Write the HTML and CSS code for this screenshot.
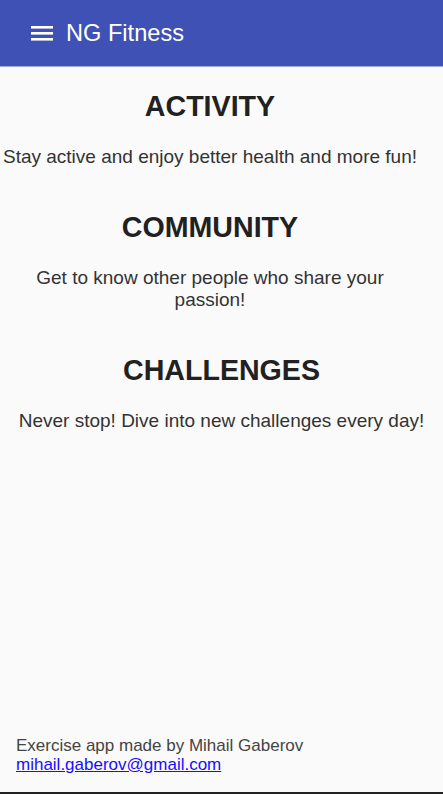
FILE: index.html
```html
<!DOCTYPE html>
<html>
<head>
<meta charset="utf-8">
<link rel="stylesheet" href="styles.css">
</head>
<body>
<div class="app">
  <header class="toolbar">
    <svg class="menu" width="22" height="16" viewBox="0 0 22 16"><rect x="0" y="1" width="22" height="2.6" fill="#fff"/><rect x="0" y="7" width="22" height="2.6" fill="#fff"/><rect x="0" y="13" width="22" height="2.6" fill="#fff"/></svg>
    <span class="title">NG Fitness</span>
  </header>
  <main class="content">
    <section class="block narrow">
      <h2>ACTIVITY</h2>
      <p>Stay active and enjoy better health and more fun!</p>
    </section>
    <section class="block narrow">
      <h2>COMMUNITY</h2>
      <p>Get to know other people who share your passion!</p>
    </section>
    <section class="block">
      <h2>CHALLENGES</h2>
      <p>Never stop! Dive into new challenges every day!</p>
    </section>
  </main>
  <footer class="footer">
    <div>Exercise app made by Mihail Gaberov</div>
    <a href="#">mihail.gaberov@gmail.com</a>
  </footer>
</div>
</body>
</html>
```
FILE: styles.css
```css
html, body {
  margin: 0;
  padding: 0;
  height: 100%;
}
body {
  background: #fafafa;
  font-family: "Liberation Sans", Arial, sans-serif;
}
.app {
  height: 792px;
  display: flex;
  flex-direction: column;
  border-bottom: 2px solid #222;
}
.toolbar {
  height: 66px;
  background: #3f51b5;
  border-bottom: 1px solid #9fa8da;
  display: flex;
  align-items: center;
  padding-left: 31px;
  box-sizing: content-box;
  flex-shrink: 0;
}
.menu {
  display: block;
  margin-right: 13px;
}
.title {
  color: #fff;
  font-size: 23.6px;
}
.content {
  flex: 1;
  padding-top: 23px;
}
.block {
  text-align: center;
  margin-bottom: 42px;
}
.block.narrow {
  width: 420px;
}
.block h2 {
  margin: 0 0 24px;
  font-size: 28.6px;
  line-height: 32px;
  font-weight: bold;
  color: #212121;
}
.block p {
  margin: 0;
  font-size: 19px;
  line-height: 22.5px;
  color: #333;
}
.footer {
  padding: 0 16px 18px;
  font-size: 17px;
  line-height: 19px;
  color: #444;
}
.footer a {
  color: #1a0dff;
}
```
